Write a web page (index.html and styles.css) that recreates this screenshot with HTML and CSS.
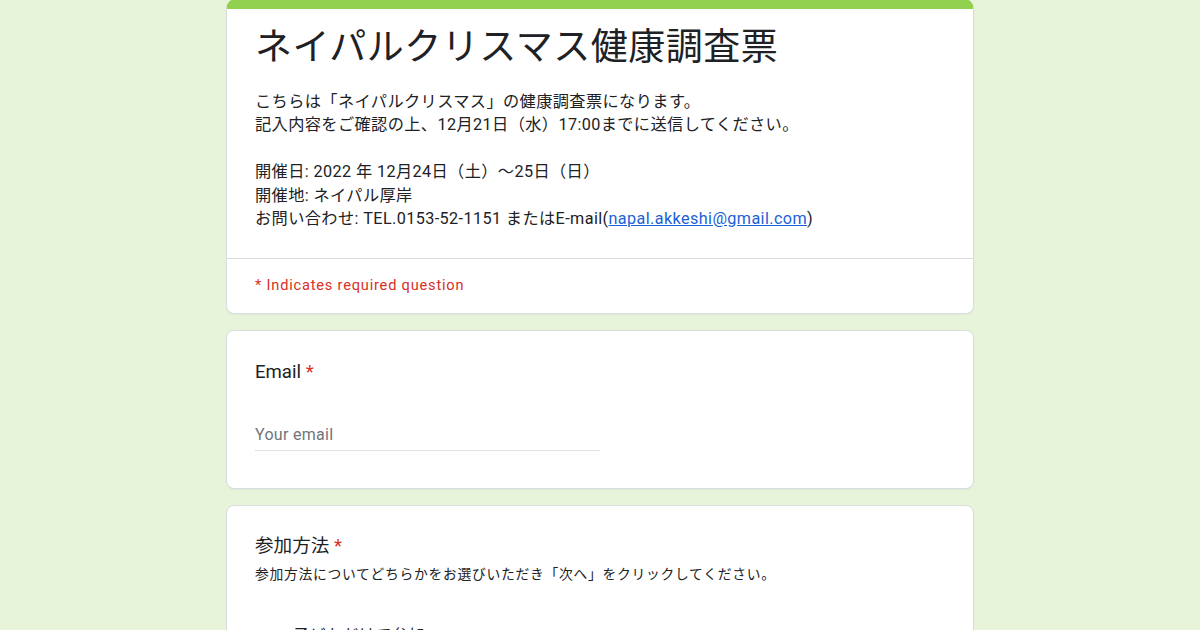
FILE: index.html
```html
<!DOCTYPE html>
<html lang="ja">
<head>
  <meta charset="UTF-8" />
  <meta name="viewport" content="width=device-width, initial-scale=1.0"/>
  <title>ネイパルクリスマス健康調査票</title>
  <link rel="stylesheet" href="styles.css">
</head>
<body>
  <div class="form-wrap">
    <div class="card header-card">
      <div class="card-body">
        <h1>ネイパルクリスマス健康調査票</h1>
        <div class="desc">
          <p>こちらは「ネイパルクリスマス」の健康調査票になります。<br>記入内容をご確認の上、12月21日（水）17:00までに送信してください。</p>
          <p>開催日: 2022 年 12月24日（土）～25日（日）<br>開催地: ネイパル厚岸<br>お問い合わせ: TEL.0153-52-1151 またはE-mail(<a href="#">napal.akkeshi@gmail.com</a>)</p>
        </div>
      </div>
      <div class="required-note">* Indicates required question</div>
    </div>

    <div class="card question">
      <div class="q-title">Email <span class="star">*</span></div>
      <div class="text-input">Your email</div>
    </div>

    <div class="card question choice">
      <div class="q-title">参加方法 <span class="star">*</span></div>
      <div class="q-desc">参加方法についてどちらかをお選びいただき「次へ」をクリックしてください。</div>
      <div class="options">
        <div class="option">子どもだけで参加</div>
        <div class="option">親子で参加</div>
      </div>
    </div>
  </div>
</body>
</html>
```

FILE: styles.css
```css
html, body {
  height: 630px;
  overflow: hidden;
}

body {
  margin: 0;
  background-color: #e7f4da;
  font-family: Roboto, 'Noto Sans CJK JP', sans-serif;
  color: #202124;
}

.form-wrap {
  width: 748px;
  margin: 0 auto;
  display: flex;
  flex-direction: column;
  gap: 16px;
}

.card {
  background-color: #fff;
  border: 1px solid #dadce0;
  border-radius: 8px;
  box-shadow: 0 1px 2px rgba(0,0,0,0.04);
}

.header-card {
  border-top: 10px solid #92d050;
  border-top-left-radius: 10px;
  border-top-right-radius: 10px;
  margin-top: -1px;
}

.card-body {
  padding: 15px 28px 28px;
  border-bottom: 1px solid #dadce0;
}

h1 {
  margin: 0;
  font-size: 37px;
  font-weight: 400;
  line-height: 48px;
  letter-spacing: 0.5px;
}

.desc {
  margin-top: 18px;
  font-size: 16.2px;
  line-height: 23.4px;
  letter-spacing: 0.4px;
}

.desc p {
  margin: 0 0 23.4px;
}

.desc p:last-child {
  margin-bottom: 0;
}

.desc a {
  color: #1a62d6;
}

.required-note {
  padding: 16px 28px 18px;
  font-size: 14.6px;
  line-height: 20px;
  letter-spacing: 0.8px;
  color: #d93025;
}

.question {
  padding: 29px 28px 37px;
}

.question.choice {
  padding-top: 28px;
}

.q-title {
  font-size: 18.6px;
  line-height: 24px;
}

.star {
  color: #d93025;
}

.text-input {
  margin-top: 39px;
  width: 345px;
  padding-bottom: 3px;
  border-bottom: 1px solid #e0e0e0;
  font-size: 16px;
  line-height: 24px;
  letter-spacing: 0.3px;
  color: #70757a;
}

.q-desc {
  margin-top: 6px;
  font-size: 13.8px;
  line-height: 20px;
  letter-spacing: 0.7px;
}

.options {
  margin-top: 40px;
  padding-left: 38px;
  display: flex;
  flex-direction: column;
  gap: 24px;
}

.option {
  font-size: 16px;
  line-height: 24px;
  letter-spacing: 0.5px;
}
```
